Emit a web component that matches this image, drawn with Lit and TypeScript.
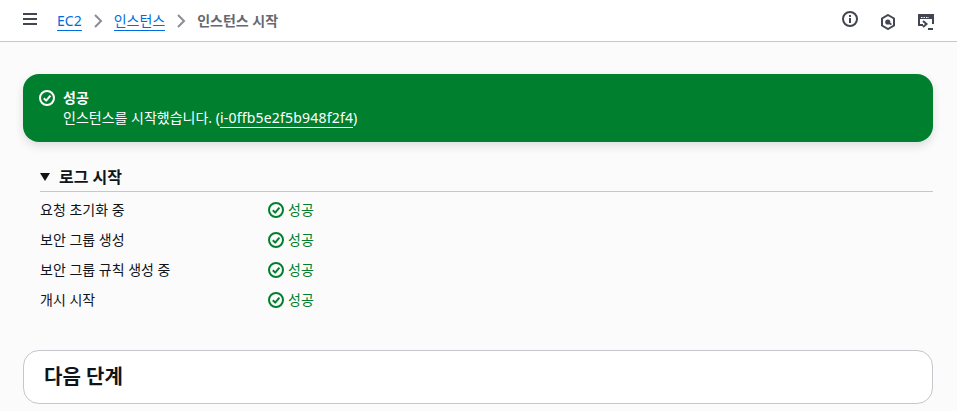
import { LitElement, css, html } from "lit";
import { customElement } from "lit/decorators.js";

const steps = ["요청 초기화 중", "보안 그룹 생성", "보안 그룹 규칙 생성 중", "개시 시작"];

const checkIcon = html`<svg viewBox="0 0 16 16" width="16" height="16" fill="none" stroke="currentColor" stroke-width="2">
  <circle cx="8" cy="8" r="7"></circle>
  <path d="M4.8 8.2 7.2 10.6 11.4 5.6" stroke-linejoin="round"></path>
</svg>`;

const chevron = html`<svg class="sep" viewBox="0 0 12 16" width="12" height="16" fill="none" stroke="currentColor" stroke-width="2">
  <path d="M3 2l6 6-6 6"></path>
</svg>`;

@customElement("app-root")
export class AppRoot extends LitElement {
  static override styles = css`
    :host {
      display: block;
      height: 411px;
      overflow: hidden;
      background: #fbfbfb;
      color: #0f141a;
      font-family: "Noto Sans", "Noto Sans CJK KR", sans-serif;
      font-size: 14px;
      line-height: 20px;
    }
    .topbar {
      display: flex;
      align-items: flex-start;
      height: 41px;
      padding: 0 23px;
      background: #fff;
      border-bottom: 1px solid #c6c6cd;
    }
    .menu {
      display: block;
      margin: 11px 20px 0 0;
      color: #424650;
    }
    .crumbs {
      display: flex;
      align-items: center;
      flex: 1;
      height: 42px;
    }
    .crumbs a {
      color: #006ce0;
      line-height: 18px;
      border-bottom: 1px solid #006ce0;
    }
    .sep {
      display: block;
      margin: 0 10px;
      color: #8c8c94;
    }
    .current {
      color: #656871;
      font-weight: 700;
    }
    .tools {
      display: flex;
      gap: 22px;
      color: #424650;
    }
    .tools svg {
      display: block;
      margin-top: 14px;
    }
    .tools .info {
      margin-top: 11px;
    }
    main {
      padding: 32px 24px 0 23px;
    }
    .flash {
      display: flex;
      gap: 8px;
      height: 68px;
      box-sizing: border-box;
      padding: 14px 16px;
      background: #00802f;
      color: #fff;
      border-radius: 16px;
      box-shadow: 0 4px 10px rgba(0, 7, 22, 0.12);
    }
    .flash svg {
      display: block;
      margin-top: 2px;
    }
    .flash strong {
      display: block;
    }
    .flash .id {
      letter-spacing: 0.2px;
      border-bottom: 1px solid #fff;
    }
    .log {
      margin: 20px 0 0 17px;
    }
    .log h2 {
      display: flex;
      align-items: center;
      gap: 9px;
      margin: 0;
      height: 29px;
      font-size: 16px;
      font-weight: 700;
      border-bottom: 1px solid #c6c6cd;
    }
    .tri {
      width: 0;
      height: 0;
      border-left: 5px solid transparent;
      border-right: 5px solid transparent;
      border-top: 8px solid #0f141a;
    }
    .rows {
      margin-top: 3px;
    }
    .row {
      display: grid;
      grid-template-columns: 228px 1fr;
      height: 30px;
      align-items: center;
    }
    .status {
      display: flex;
      align-items: center;
      gap: 4px;
      color: #00802f;
    }
    .next {
      margin-top: 35px;
      height: 54px;
      box-sizing: border-box;
      padding: 0 20px;
      display: flex;
      align-items: center;
      background: #fff;
      border: 1px solid #c6c6cd;
      border-radius: 16px;
    }
    .next h2 {
      margin: 0;
      font-size: 20px;
      font-weight: 700;
    }
  `;

  override render() {
    return html`
      <header class="topbar">
        <svg class="menu" viewBox="0 0 14 16" width="14" height="16" fill="none" stroke="currentColor" stroke-width="2">
          <path d="M0 3h14M0 8h14M0 13h14"></path>
        </svg>
        <nav class="crumbs">
          <a>EC2</a>
          ${chevron}
          <a>인스턴스</a>
          ${chevron}
          <span class="current">인스턴스 시작</span>
        </nav>
        <div class="tools">
          <svg class="info" viewBox="0 0 16 16" width="16" height="16" fill="none" stroke="currentColor" stroke-width="2">
            <circle cx="8" cy="8" r="7"></circle>
            <path d="M8 7v5M8 4v2"></path>
          </svg>
          <svg viewBox="0 0 16 16" width="16" height="16" fill="none" stroke="currentColor" stroke-width="2">
            <path d="M8 1l6 3.500v7L8 15l-6-3.500v-7z"></path>
            <circle cx="7.800" cy="8" r="2.600" fill="currentColor" stroke="none"></circle>
            <path d="M8 8.500l3.500 2" stroke-width="1.500"></path>
          </svg>
          <svg viewBox="0 0 16 16" width="16" height="16" fill="none" stroke="currentColor" stroke-width="2">
            <path d="M5 11H1V1h14v9"></path>
            <rect x="1" y="1" width="14" height="4" fill="currentColor" stroke="none"></rect>
            <path d="M3 3.500h8" stroke="#fff" stroke-width="1" stroke-dasharray="1.500 1"></path>
            <path d="M5 7l3.500 3L5 13M10 15h5"></path>
          </svg>
        </div>
      </header>
      <main>
        <section class="flash">
          ${checkIcon}
          <div>
            <strong>성공</strong>
            <div>인스턴스를 시작했습니다. (<span class="id">i-0ffb5e2f5b948f2f4</span>)</div>
          </div>
        </section>
        <section class="log">
          <h2><span class="tri"></span>로그 시작</h2>
          <div class="rows">
            ${steps.map(
              (step) => html`<div class="row">
                <span>${step}</span>
                <span class="status">${checkIcon}성공</span>
              </div>`
            )}
          </div>
        </section>
        <section class="next"><h2>다음 단계</h2></section>
      </main>
    `;
  }
}
